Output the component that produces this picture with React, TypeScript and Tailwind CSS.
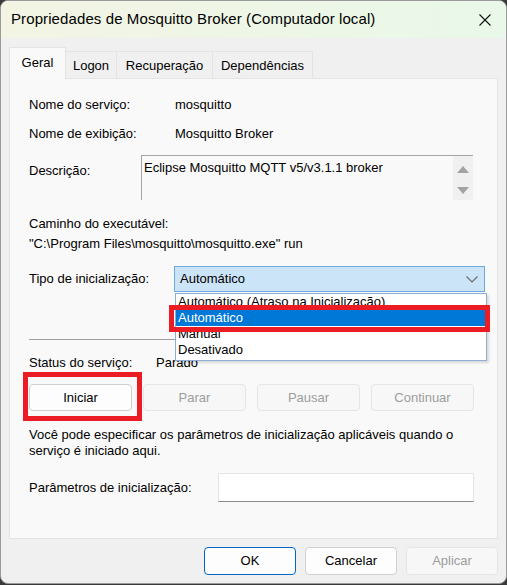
import React from "react";

const font = "font-['Liberation_Sans',Arial,sans-serif]";

function Tab({ label, active }: { label: string; active?: boolean }) {
  if (active) {
    return (
      <div className="relative z-10 -mb-px flex h-[32px] w-[57px] items-center justify-center border border-b-0 border-[#e3e3e3] bg-[#f9f9f9] pb-[2px] text-[13px]">
        {label}
      </div>
    );
  }
  return null;
}

export default function App() {
  const tabs = [
    { label: "Logon", w: "w-[51px]" },
    { label: "Recuperação", w: "w-[96px]" },
    { label: "Dependências", w: "w-[100px]" },
  ];

  return (
    <div className={`h-[585px] w-[507px] bg-[#3a3a3a] ${font} text-black`}>
      <div className="flex h-[584px] w-[507px] flex-col overflow-hidden rounded-[8px] border border-[#9b9b9b] bg-[#f0f0f0]">
        {/* title bar */}
        <div className="flex h-[37px] shrink-0 items-center justify-between bg-gradient-to-r from-[#f3f4e4] to-[#e9f8e9] pl-[10px] pr-[15px]">
          <span className="text-[15px] tracking-[0.1px]">Propriedades de Mosquitto Broker (Computador local)</span>
          <svg width="12" height="12" viewBox="0 0 12 12">
            <path d="M0.5 0.5 L11.5 11.5 M11.5 0.5 L0.5 11.5" stroke="#111" strokeWidth="1.1" />
          </svg>
        </div>

        {/* tabs */}
        <div className="mt-[9px] flex items-end pl-[8px]">
          <Tab label="Geral" active />
          {tabs.map((t) => (
            <div
              key={t.label}
              className={`flex h-[27px] ${t.w} items-center justify-center border border-b-0 border-l-0 border-[#e3e3e3] bg-[#f0f0f0] pt-[2px] text-[13px]`}
            >
              {t.label}
            </div>
          ))}
        </div>

        {/* panel */}
        <div className="ml-[8px] flex h-[461px] w-[489px] flex-col border border-[#e3e3e3] bg-[#f9f9f9] pl-[19px] pt-[18px] text-[13px] leading-[16px]">
          <div className="flex h-[16px] items-center">
            <span className="w-[146px]">Nome do serviço:</span>
            <span>mosquitto</span>
          </div>
          <div className="mt-[13px] flex h-[16px] items-center">
            <span className="w-[146px]">Nome de exibição:</span>
            <span>Mosquitto Broker</span>
          </div>
          <div className="mt-[13px] flex h-[45px]">
            <span className="mt-[8px] w-[112px]">Descrição:</span>
            <div className="flex h-[45px] w-[332px] border-l border-t border-[#a5a5a5] bg-[#f9f9f9]">
              <div className="flex-1 pl-[2px] pt-[4px]">Eclipse Mosquitto MQTT v5/v3.1.1 broker</div>
              <div className="flex w-[20px] flex-col items-center justify-between bg-[#f0f0f0] pb-[6px] pt-[10px]">
                <svg width="12" height="7" viewBox="0 0 12 7">
                  <path d="M6 0 L12 7 L0 7 Z" fill="#a3a3a3" />
                </svg>
                <svg width="12" height="7" viewBox="0 0 12 7">
                  <path d="M0 0 L12 0 L6 7 Z" fill="#a3a3a3" />
                </svg>
              </div>
            </div>
          </div>
          <div className="mt-[16px] h-[16px]">Caminho do executável:</div>
          <div className="mt-[4px] h-[16px]">"C:\Program Files\mosquitto\mosquitto.exe" run</div>

          <div className="relative z-20 mt-[14px] flex h-[26px] items-center">
            <span className="w-[145px]">Tipo de inicialização:</span>
            <div className="relative h-[26px] w-[311px]">
              <div className="flex h-[26px] items-center justify-between border border-[#70a8e0] bg-[#cce4f7] pl-[5px] pr-[6px]">
                <span>Automático</span>
                <svg width="12" height="7" viewBox="0 0 12 7">
                  <path d="M0.5 0.5 L6 6 L11.5 0.5" fill="none" stroke="#6d6d6d" strokeWidth="1.2" />
                </svg>
              </div>
              {/* open list */}
              <div className="absolute left-[1px] top-[27px] w-[312px] border border-[#8aaed6] bg-white pb-[2px] shadow-[2px_2px_2px_rgba(0,0,0,0.12)]">
                <div className="h-[16px] pl-[2px] leading-[16px]">Automático (Atraso na Inicialização)</div>
                <div className="h-[16px] bg-[#0078d7] pl-[2px] leading-[16px] text-white">Automático</div>
                <div className="h-[16px] pl-[2px] leading-[16px]">Manual</div>
                <div className="h-[16px] pl-[2px] leading-[16px]">Desativado</div>
                <div className="absolute left-[-7px] top-[11px] h-[27px] w-[321px] border-[5px] border-[#ec1c24]" />
              </div>
            </div>
          </div>

          <div className="mt-[47px] h-[2px] w-[444px] border-t border-[#a0a0a0] border-b-white" />

          <div className="mt-[14px] flex h-[16px] items-center">
            <span className="w-[127px]">Status do serviço:</span>
            <span>Parado</span>
          </div>

          <div className="relative mt-[13px] grid h-[27px] w-[445px] grid-cols-4 gap-[11px]">
            <div className="flex items-center justify-center rounded-[4px] border border-[#d0d0d0] bg-[#fdfdfd]">Iniciar</div>
            <div className="flex items-center justify-center rounded-[4px] border border-[#e5e5e5] bg-[#f7f7f7] text-[#9d9d9d]">Parar</div>
            <div className="flex items-center justify-center rounded-[4px] border border-[#e5e5e5] bg-[#f7f7f7] text-[#9d9d9d]">Pausar</div>
            <div className="flex items-center justify-center rounded-[4px] border border-[#e5e5e5] bg-[#f7f7f7] text-[#9d9d9d]">Continuar</div>
            <div className="absolute left-[-6px] top-[-12px] h-[49px] w-[119px] border-[5px] border-[#ec1c24]" />
          </div>

          <div className="mt-[16px] w-[450px]">
            Você pode especificar os parâmetros de inicialização aplicáveis quando o serviço é iniciado aqui.
          </div>

          <div className="mt-[14px] flex h-[29px] items-center">
            <span className="w-[189px]">Parâmetros de inicialização:</span>
            <div className="h-[29px] w-[256px] border border-[#e5e5e5] border-b-[#8a8a8a] bg-white" />
          </div>
        </div>

        {/* bottom buttons */}
        <div className="mt-[8px] flex justify-end gap-[9px] pr-[8px] text-[13px]">
          <div className="flex h-[28px] w-[92px] items-center justify-center rounded-[4px] border border-[#0067c0] bg-[#fdfdfd]">OK</div>
          <div className="flex h-[28px] w-[92px] items-center justify-center rounded-[4px] border border-[#d0d0d0] bg-[#fdfdfd]">Cancelar</div>
          <div className="flex h-[28px] w-[92px] items-center justify-center rounded-[4px] border border-[#e5e5e5] bg-[#f7f7f7] text-[#9d9d9d]">Aplicar</div>
        </div>
      </div>
    </div>
  );
}
